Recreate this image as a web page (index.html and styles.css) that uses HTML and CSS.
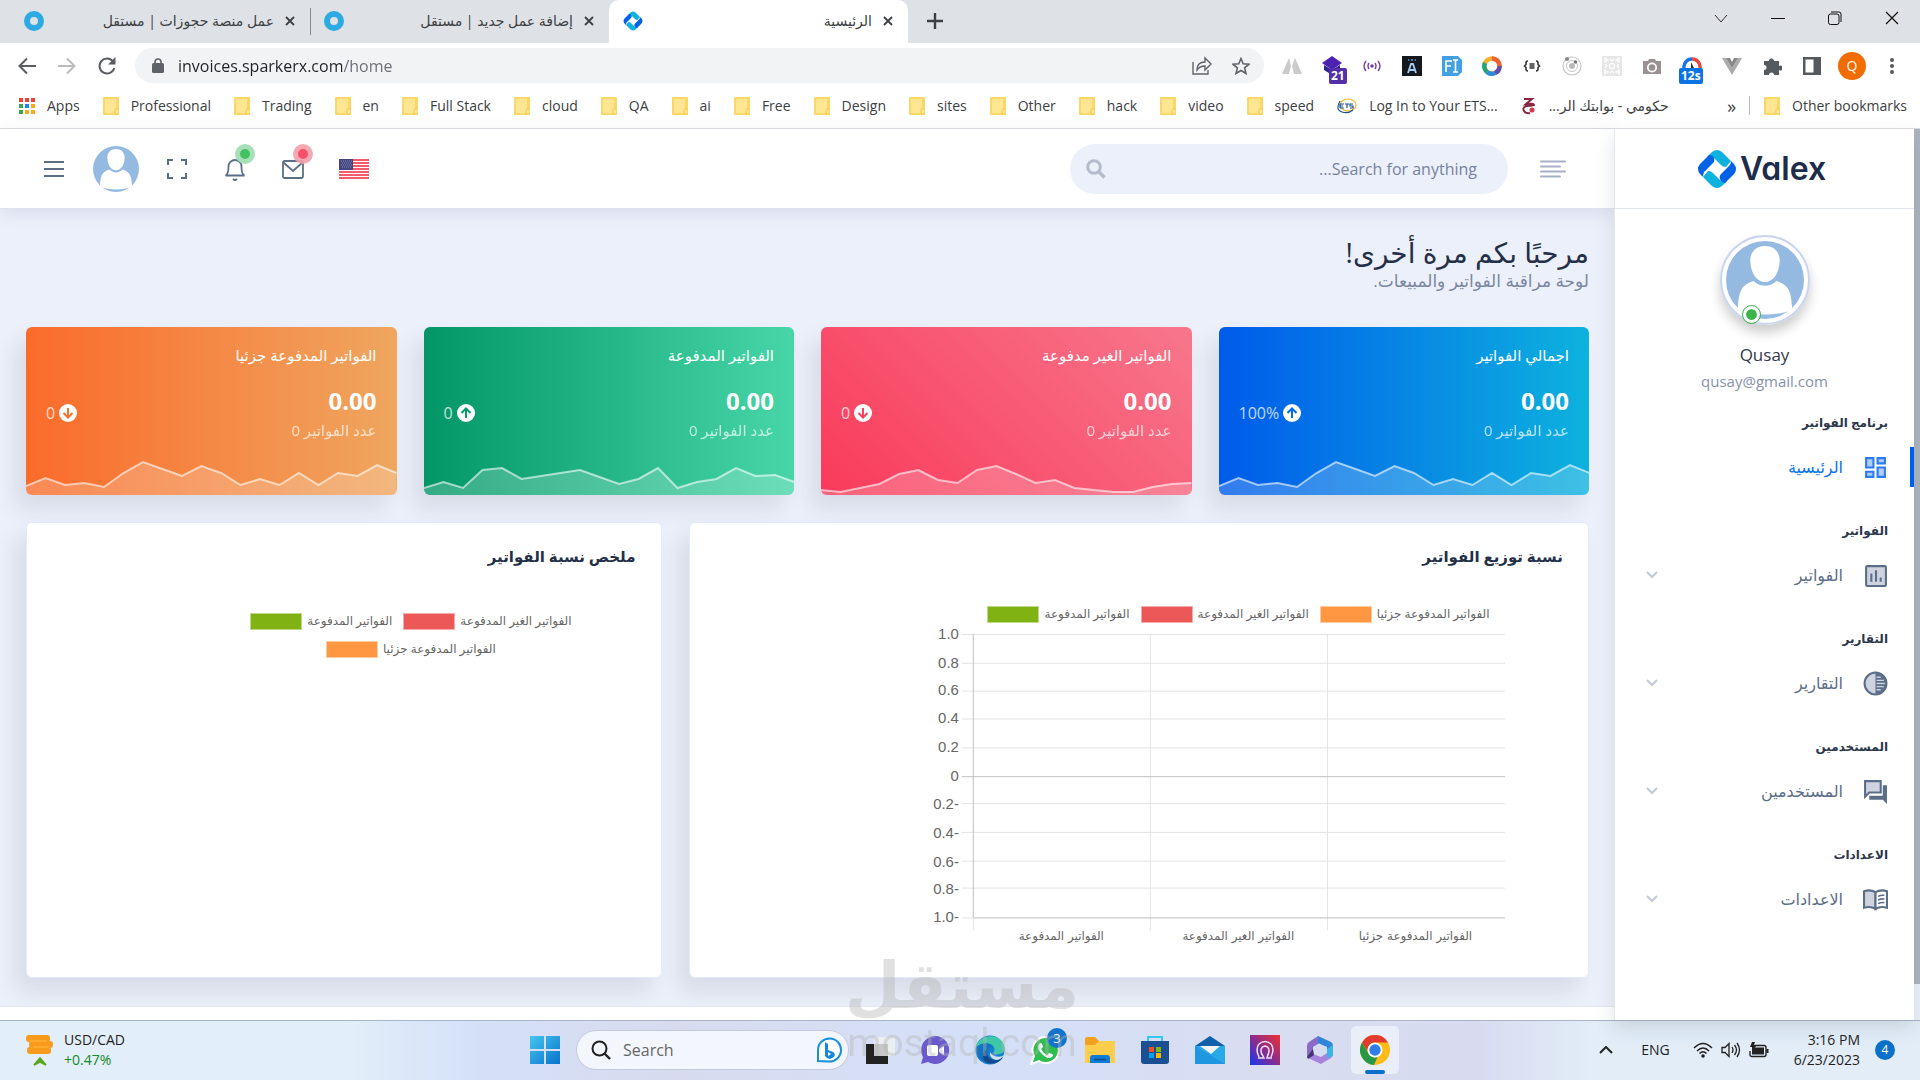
FILE: index.html
```html
<!DOCTYPE html>
<html lang="ar">
<head>
    <meta charset="utf-8">
    <meta name="viewport" content="width=device-width, initial-scale=1">
    <title>الرئيسية</title>
    <link rel="stylesheet" href="styles.css">
</head>
<body>
    <!-- shared icons -->
    <svg class="sprite" aria-hidden="true">
        <symbol id="folder" viewBox="0 0 16 18">
            <rect width="16" height="18" rx="1" fill="#fbd768"/>
            <path d="M2 2h11v10l-1 4H2z" fill="#ffe693"/>
            <rect x="12" y="12" width="4" height="5" rx="1" fill="#ffe693" stroke="#f7c948"/>
        </symbol>
        <symbol id="close" viewBox="0 0 10 10">
            <path d="M1 1l8 8M9 1L1 9" stroke="#3c4043" stroke-width="1.8"/>
        </symbol>
        <symbol id="mostaql" viewBox="0 0 20 20">
            <circle cx="10" cy="10" r="7" fill="none" stroke="#2caae1" stroke-width="6"/>
        </symbol>
        <symbol id="valex" viewBox="0 0 40 40">
            <path d="M15 3q5-4 10 0l9 9-5 6q-3 0-5-2l-7-7q-2-1-6 0l-1-1z" fill="#0db2de"/>
            <path d="M25 37q-5 4-10 0l-9-9 5-6q3 0 5 2l7 7q2 1 6 0l1 1z" fill="#0db2de"/>
            <path d="M3 25q-4-5 0-10l9-9q3-1 5 3 1 3-1 5l-9 9q-1 3-1 5z" fill="#0162e8"/>
            <path d="M37 15q4 5 0 10l-9 9q-4-1-5-4-1-3 1-5l8-8q2-2 2-5z" fill="#0162e8"/>
        </symbol>
        <symbol id="avatar" viewBox="0 0 80 80">
            <circle cx="40" cy="40" r="40" fill="#94bae1"/>
            <path d="M40 5c10 0 16 7 15 17-1 12-7 20-15 20s-14-8-15-20C24 12 30 5 40 5z" fill="#fff"/>
            <path d="M28 41q12 10 24 0c11 4 15 8 16 30-17 6-39 6-56 0 1-22 5-26 16-30z" fill="#fff"/>
        </symbol>
        <symbol id="chevron" viewBox="0 0 12 8">
            <path d="M1 1l5 5 5-5" fill="none" stroke="#c3c9d8" stroke-width="2"/>
        </symbol>
        <symbol id="arrow-up" viewBox="0 0 18 18">
            <circle cx="9" cy="9" r="9" fill="#fff"/>
            <path d="M9 14V4.500M4.500 9L9 4.500 13.500 9" fill="none" stroke="currentColor" stroke-width="2"/>
        </symbol>
        <symbol id="arrow-down" viewBox="0 0 18 18">
            <circle cx="9" cy="9" r="9" fill="#fff"/>
            <path d="M9 4v9.500M4.500 9L9 13.500 13.500 9" fill="none" stroke="currentColor" stroke-width="2"/>
        </symbol>
    </svg>

    <!-- tabs -->
    <div class="tab-strip">
        <div class="tab">
            <svg class="favicon"><use href="#mostaql"/></svg>
            <a href="#" dir="rtl">عمل منصة حجوزات | مستقل</a>
            <button type="button" aria-label="Close"><svg width="10" height="10"><use href="#close"/></svg></button>
        </div>
        <div class="tab tab-divided">
            <svg class="favicon"><use href="#mostaql"/></svg>
            <a href="#" dir="rtl">إضافة عمل جديد | مستقل</a>
            <button type="button" aria-label="Close"><svg width="10" height="10"><use href="#close"/></svg></button>
        </div>
        <div class="tab active">
            <svg class="favicon"><use href="#valex"/></svg>
            <a href="#" dir="rtl">الرئيسية</a>
            <button type="button" aria-label="Close"><svg width="10" height="10"><use href="#close"/></svg></button>
        </div>
        <button class="new-tab" type="button" aria-label="New tab"><svg width="16" height="16" viewBox="0 0 16 16"><path d="M8 0v16M0 8h16" stroke="#3c4043" stroke-width="2.400"/></svg></button>
        <div class="window-buttons">
            <button type="button" aria-label="Search tabs"><svg width="14" height="14" viewBox="0 0 14 14"><path d="M1 4l6 7 6-7" fill="none" stroke="#333"/></svg></button>
            <button type="button" aria-label="Minimize"><svg width="14" height="14" viewBox="0 0 14 14"><path d="M0 7.500h14" stroke="#111"/></svg></button>
            <button type="button" aria-label="Restore"><svg width="14" height="14" viewBox="0 0 14 14"><rect x=".5" y="3" width="10.500" height="10.500" rx="2" fill="none" stroke="#111"/><path d="M3 1h8q2 0 2 2v8" fill="none" stroke="#111"/></svg></button>
            <button type="button" aria-label="Close window"><svg width="14" height="14" viewBox="0 0 14 14"><path d="M1 1l12 12M13 1L1 13" stroke="#111" stroke-width="1.200"/></svg></button>
        </div>
    </div>

    <!-- address bar -->
    <div class="toolbar">
        <div class="nav-buttons">
            <button type="button" aria-label="Back"><svg width="18" height="18" viewBox="0 0 18 18"><path d="M18 9H2M9 1.500L1.500 9 9 16.500" fill="none" stroke="#5a5d61" stroke-width="2"/></svg></button>
            <button type="button" aria-label="Forward"><svg width="18" height="18" viewBox="0 0 18 18"><path d="M0 9h16M9 1.500L16.500 9 9 16.500" fill="none" stroke="#babcbe" stroke-width="2"/></svg></button>
            <button type="button" aria-label="Reload"><svg width="18" height="18" viewBox="0 0 18 18"><path d="M15 4.500A7.500 7.500 0 1 0 16.300 11" fill="none" stroke="#5a5d61" stroke-width="2"/><path d="M17.500 0v7.500H10z" fill="#5a5d61"/></svg></button>
        </div>
        <div class="address">
            <svg width="12" height="15" viewBox="0 0 12 15"><path d="M3 6V4a3 3 0 0 1 6 0v2" fill="none" stroke="#5f6368" stroke-width="1.600"/><rect y="5" width="12" height="10" rx="1.500" fill="#5f6368"/></svg>
            <input type="text" aria-label="Address" value="invoices.sparkerx.com/home">
            <svg width="20" height="20" viewBox="0 0 20 20"><path d="M1 6v12h15v-4M5 14c0-6 4-8 8-8V2l6 6-6 6v-4c-4 0-6 1-8 4z" fill="none" stroke="#5f6368" stroke-width="1.400"/></svg>
            <svg width="18" height="18" viewBox="0 0 18 18"><path d="M9 1.500l2.200 5.200 5.800.5-4.400 3.700 1.400 5.600-5-3-5 3 1.400-5.600L1 7.200l5.800-.5z" fill="none" stroke="#5f6368" stroke-width="1.600"/></svg>
        </div>
        <div class="extensions">
            <svg viewBox="0 0 20 20"><path d="M7 2l2 8-2 8H0zM13 2l-3 8 2 8h8z" fill="#cbcbcb"/></svg>
            <span class="ext-badge purple"><svg viewBox="0 0 20 20"><path d="M10 0l10 7-10 7L0 7z" fill="#4d22b3"/><path d="M2 9l8 5 8-5v5l-8 5-8-5z" fill="#31238c"/></svg><b>21</b></span>
            <svg viewBox="0 0 20 20"><circle cx="10" cy="10" r="1.800" fill="#7b3ea8"/><path d="M7 7q-2 3 0 6M13 7q2 3 0 6M4 5q-4 5 0 10M16 5q4 5 0 10" fill="none" stroke="#7b3ea8" stroke-width="1.400"/></svg>
            <svg viewBox="0 0 20 20"><rect width="20" height="20" fill="#15181e"/><path d="M6 17l3-9h2l3 9M7 14h6" fill="none" stroke="#a5cdf0" stroke-width="1.800"/><path d="M7 3q-1 1 0 2M13 3q1 1 0 2" stroke="#57a3dc" fill="none"/><circle cx="10" cy="4" r="1" fill="#57a3dc"/></svg>
            <svg viewBox="0 0 20 20"><path d="M0 0h16l4 4v12l-4 4H0z" fill="#44a1e1"/><path d="M4 16V5h6M4 10h5M11 4h5M11 16h5M13.500 4v12" stroke="#fff" stroke-width="1.600" fill="none"/></svg>
            <svg viewBox="0 0 20 20"><g fill="none" stroke-width="4.500"><circle cx="10" cy="10" r="7.600" stroke="#f5b32b" /><path d="M10 2.400A7.600 7.600 0 0 1 17.600 10" stroke="#ee6139"/><path d="M17.600 10A7.600 7.600 0 0 1 13 17" stroke="#5c4eb2"/><path d="M13 17a7.600 7.600 0 0 1-8-1" stroke="#2b8bdd"/><path d="M5 16a7.600 7.600 0 0 1-2-9" stroke="#1ea57b"/></g></svg>
            <svg viewBox="0 0 20 20"><path d="M6 5q-2 0-2 2v1.500L2.500 10 4 11.500V13q0 2 2 2M14 5q2 0 2 2v1.500l1.500 1.500-1.500 1.500V13q0 2-2 2M7.500 8h5M7.500 10h5M7.500 12h5" fill="none" stroke="#333" stroke-width="1.600"/></svg>
            <svg viewBox="0 0 20 20"><circle cx="10" cy="10" r="9" fill="none" stroke="#c4c4c4" stroke-width="1.200"/><circle cx="10" cy="10" r="5.500" fill="none" stroke="#c4c4c4"/><circle cx="10" cy="10" r="3" fill="#b9b9b9"/><circle cx="5" cy="3" r="2" fill="#888"/><circle cx="13.500" cy="6" r="1.800" fill="#777"/></svg>
            <svg viewBox="0 0 20 20"><rect width="20" height="20" fill="#e6e6e6"/><g fill="none" stroke="#fff" stroke-width="1.200"><circle cx="10" cy="10" r="2.500"/><path d="M3 2v4l3-2zM17 2v4l-3-2zM3 14v4l3-2zM17 14v4l-3-2zM8 3l2 2 2-2M8 17l2-2 2 2M3 8l2 2-2 2M17 8l-2 2 2 2"/></g></svg>
            <svg viewBox="0 0 20 20"><path d="M1 5h5l1-2h6l1 2h5v13H1z" fill="#9a9292"/><circle cx="10" cy="11.500" r="4.200" fill="none" stroke="#fff" stroke-width="1.800"/></svg>
            <span class="ext-badge blue"><svg viewBox="0 0 20 20"><path d="M2 12a8 8 0 0 1 8-9" fill="none" stroke="#1a73e8" stroke-width="3.500"/><path d="M10 3a8 8 0 0 1 8 9" fill="none" stroke="#e8453c" stroke-width="3.500"/><path d="M9 6l3 6H9z" fill="#333"/></svg><b>12s</b></span>
            <svg viewBox="0 0 20 20"><path d="M0 2h4l6 10 6-10h4L10 19z" fill="#ababab"/><path d="M4 2h4l2 4 2-4h4l-6 10z" fill="#868686"/></svg>
            <svg viewBox="0 0 20 20"><path d="M2 5h5a2.500 2.500 0 1 1 5 0h5v5a2.500 2.500 0 1 1 0 4v5h-5a2.500 2.500 0 1 0-5 0H2v-5a2.500 2.500 0 1 0 0-5z" fill="#56595d"/></svg>
            <svg viewBox="0 0 20 20"><path d="M1 1h18v18H1zM3.500 3.500v13h8v-13z" fill="#56595d" fill-rule="evenodd"/></svg>
            <button class="profile" type="button">Q</button>
            <svg viewBox="0 0 20 20"><g fill="#56595d"><circle cx="10" cy="4" r="2"/><circle cx="10" cy="10" r="2"/><circle cx="10" cy="16" r="2"/></g></svg>
        </div>
    </div>

    <!-- bookmarks -->
    <nav class="bookmarks">
        <a href="#"><svg width="16" height="16" viewBox="0 0 16 16"><path d="M0 0h4v4H0zM6 0h4v4H6zM12 0h4v4h-4z" fill="#ea4335"/><path d="M0 6h4v4H0zM0 12h4v4H0z" fill="#34a853"/><path d="M6 6h4v4H6z" fill="#1a83ee"/><path d="M12 6h4v4h-4zM6 12h4v4H6zM12 12h4v4h-4z" fill="#f9ab15"/></svg>Apps</a>
        <a href="#"><svg class="folder"><use href="#folder"/></svg>Professional</a>
        <a href="#"><svg class="folder"><use href="#folder"/></svg>Trading</a>
        <a href="#"><svg class="folder"><use href="#folder"/></svg>en</a>
        <a href="#"><svg class="folder"><use href="#folder"/></svg>Full Stack</a>
        <a href="#"><svg class="folder"><use href="#folder"/></svg>cloud</a>
        <a href="#"><svg class="folder"><use href="#folder"/></svg>QA</a>
        <a href="#"><svg class="folder"><use href="#folder"/></svg>ai</a>
        <a href="#"><svg class="folder"><use href="#folder"/></svg>Free</a>
        <a href="#"><svg class="folder"><use href="#folder"/></svg>Design</a>
        <a href="#"><svg class="folder"><use href="#folder"/></svg>sites</a>
        <a href="#"><svg class="folder"><use href="#folder"/></svg>Other</a>
        <a href="#"><svg class="folder"><use href="#folder"/></svg>hack</a>
        <a href="#"><svg class="folder"><use href="#folder"/></svg>video</a>
        <a href="#"><svg class="folder"><use href="#folder"/></svg>speed</a>
        <a href="#"><svg width="20" height="16" viewBox="0 0 20 16"><ellipse cx="11" cy="7" rx="8" ry="6" fill="none" stroke="#f2b632" stroke-width="1.200"/><path d="M3 3Q-2 12 5 14q6 2 11-2" fill="none" stroke="#1d4f91" stroke-width="1.200"/><path d="M3 6h4M3 8h3M3 10h4M3 6v4M8 6h4M10 6v4M16 6h-3v2h3v2h-3" fill="none" stroke="#1d4f91" stroke-width="1.200"/></svg>Log In to Your ETS...</a>
        <a href="#"><svg width="16" height="18" viewBox="0 0 16 18"><path d="M3 2h8L5 7q8-1 8 1-3 1-8 1-4 2-2 5t6 2" fill="none" stroke="#8a2740" stroke-width="2"/><circle cx="11" cy="13" r="2.500" fill="#e0344a"/></svg><span dir="rtl">حكومي - بوابتك الر...</span></a>
        <span class="more">»</span>
        <a class="other" href="#"><svg class="folder"><use href="#folder"/></svg>Other bookmarks</a>
    </nav>

    <!-- page -->
    <div class="page" dir="rtl">
        <div class="scrollbar"><div class="thumb"></div></div>

        <aside class="sidebar">
            <a class="logo" href="#" dir="ltr"><svg width="40" height="40"><use href="#valex"/></svg>Valex</a>
            <div class="user">
                <div class="user-photo">
                    <svg width="78" height="78"><use href="#avatar"/></svg>
                    <span class="status"></span>
                </div>
                <h4>Qusay</h4>
                <p>qusay@gmail.com</p>
            </div>
            <nav class="menu">
                <section class="current">
                    <h3>برنامج الفواتير</h3>
                    <a href="#">
                        <svg viewBox="0 0 24 24"><path d="M3 3h7v9H3zM14 3h7v5h-7zM14 12h7v9h-7zM3 16h7v5H3z" fill="#aecdf7" stroke="#2b7cee" stroke-width="2"/></svg>
                        <span>الرئيسية</span>
                    </a>
                </section>
                <section>
                    <h3>الفواتير</h3>
                    <a href="#">
                        <svg viewBox="0 0 24 24"><rect x="3" y="3" width="19" height="19" rx="1" fill="#ced3df" stroke="#5b6e88" stroke-width="2"/><path d="M8 10v8M12.500 7v11M17 14v4" stroke="#5b6e88" stroke-width="2"/></svg>
                        <span>الفواتير</span>
                        <svg class="arrow"><use href="#chevron"/></svg>
                    </a>
                </section>
                <section>
                    <h3>التقارير</h3>
                    <a href="#">
                        <svg viewBox="0 0 24 24"><circle cx="12" cy="12" r="10.500" fill="#ced3df" stroke="#5b6e88" stroke-width="2"/><path d="M12 2a10 10 0 0 1 0 20z" fill="#5b6e88"/><path d="M13 6h4M13 9h7M13 12h8M13 15h7M13 18h4" stroke="#ced3df" stroke-width="1.300"/></svg>
                        <span>التقارير</span>
                        <svg class="arrow"><use href="#chevron"/></svg>
                    </a>
                </section>
                <section>
                    <h3>المستخدمين</h3>
                    <a href="#">
                        <svg viewBox="0 0 24 24"><path d="M2 2h15v11H6l-4 4z" fill="#ced3df" stroke="#5b6e88" stroke-width="2"/><path d="M19 6h4v18l-4-4H6v-4h13z" fill="#5b6e88"/></svg>
                        <span>المستخدمين</span>
                        <svg class="arrow"><use href="#chevron"/></svg>
                    </a>
                </section>
                <section>
                    <h3>الاعدادات</h3>
                    <a href="#">
                        <svg viewBox="0 0 24 24"><path d="M1 4q6-2 11 1v16q-5-3-11-1z" fill="#ced3df" stroke="#5b6e88" stroke-width="2"/><path d="M12 5q5-3 11-1v16q-6-2-11 1z" fill="#fff" stroke="#5b6e88" stroke-width="2"/><path d="M14.500 9q3-1.500 6-1M14.500 12.500q3-1.500 6-1M14.500 16q3-1.500 6-1" fill="none" stroke="#5b6e88" stroke-width="1.500"/></svg>
                        <span>الاعدادات</span>
                        <svg class="arrow"><use href="#chevron"/></svg>
                    </a>
                </section>
            </nav>
        </aside>

        <main>
            <header class="page-header">
                <button type="button" aria-label="Toggle sidebar"><svg width="26" height="18" viewBox="0 0 26 18"><path d="M1 1.500h24M1 6.500h19M1 11.500h24M1 16.500h19" stroke="#a5b0c6" stroke-width="2" stroke-linecap="round"/></svg></button>
                <form class="search">
                    <input type="search" aria-label="Search" placeholder="Search for anything...">
                    <button type="button" aria-label="Go"><svg width="20" height="20" viewBox="0 0 20 20"><circle cx="8" cy="8" r="6.300" fill="none" stroke="#b4bccd" stroke-width="3"/><path d="M12.500 12.500l6 6" stroke="#b4bccd" stroke-width="3.500"/></svg></button>
                </form>
                <div class="header-icons">
                    <button class="flag" type="button" aria-label="Language"><svg width="30" height="20" viewBox="0 0 30 20"><path fill="#fff" d="M0 0h30v20H0z"/><path d="M0 1h30M0 4h30M0 7h30M0 10h30M0 13h30M0 16h30M0 19h30" stroke="#f5596c" stroke-width="1.800"/><path fill="#46467f" d="M0 0h14v11H0z"/><path d="M2 2h11M3 4h10M2 6h11M3 8h10" stroke="#8087b8" stroke-dasharray="1 1"/></svg></button>
                    <button class="mail" type="button" aria-label="Messages"><svg width="24" height="24" viewBox="0 0 24 24" fill="none" stroke="#5b6e88" stroke-width="1.800"><rect x="2" y="4" width="20" height="17" rx="1.500"/><path d="M2 5l10 9 10-9"/></svg><i></i></button>
                    <button class="bell" type="button" aria-label="Notifications"><svg width="24" height="24" viewBox="0 0 24 24" fill="none" stroke="#5b6e88" stroke-width="1.800"><path d="M2.500 18.500q3-1 3-9a6.500 6.500 0 0 1 13 0q0 8 3 9zM10 22q2 2 4 0"/></svg><i></i></button>
                    <button type="button" aria-label="Fullscreen"><svg width="24" height="24" viewBox="0 0 24 24" fill="none" stroke="#5b6e88" stroke-width="2"><path d="M8 3H3v5M16 3h5v5M8 21H3v-5M16 21h5v-5"/></svg></button>
                    <button class="account" type="button" aria-label="Account"><svg width="46" height="46"><use href="#avatar"/></svg></button>
                    <button type="button" aria-label="Menu"><svg width="24" height="24" viewBox="0 0 24 24"><path d="M2 5h20M2 12h20M2 19h20" stroke="#5b6e88" stroke-width="2"/></svg></button>
                </div>
            </header>

            <div class="content">
                <div class="welcome">
                    <h2>مرحبًا بكم مرة أخرى!</h2>
                    <p>لوحة مراقبة الفواتير والمبيعات.</p>
                </div>

                <div class="stats">
                    <div class="stat blue">
                        <h6>اجمالي الفواتير</h6>
                        <div class="stat-row">
                            <div><h4>0.00</h4><p>عدد الفواتير 0</p></div>
                            <span class="change"><svg width="18" height="18"><use href="#arrow-up"/></svg>100%</span>
                        </div>
                        <svg class="spark" viewBox="0 0 380 40" preserveAspectRatio="none">
                            <path d="M0 31L20 23 40 30 60 28 80 32 100 18 120 7 140 14 160 21 180 11 200 18 220 30 240 24 260 30 280 18 300 30 320 18 340 21 360 10 380 18V40H0z"/>
                            <polyline points="0,31 20,23 40,30 60,28 80,32 100,18 120,7 140,14 160,21 180,11 200,18 220,30 240,24 260,30 280,18 300,30 320,18 340,21 360,10 380,18"/>
                        </svg>
                    </div>
                    <div class="stat red">
                        <h6>الفواتير الغير مدفوعة</h6>
                        <div class="stat-row">
                            <div><h4>0.00</h4><p>عدد الفواتير 0</p></div>
                            <span class="change"><svg width="18" height="18"><use href="#arrow-down"/></svg>0</span>
                        </div>
                        <svg class="spark" viewBox="0 0 380 40" preserveAspectRatio="none">
                            <path d="M0 35L20 37 40 33 60 29 80 19 100 15 120 25 140 28 160 15 180 11 200 19 220 28 240 25 260 33 280 35 300 37 320 37 340 32 360 29 380 28V40H0z"/>
                            <polyline points="0,35 20,37 40,33 60,29 80,19 100,15 120,25 140,28 160,15 180,11 200,19 220,28 240,25 260,33 280,35 300,37 320,37 340,32 360,29 380,28"/>
                        </svg>
                    </div>
                    <div class="stat green">
                        <h6>الفواتير المدفوعة</h6>
                        <div class="stat-row">
                            <div><h4>0.00</h4><p>عدد الفواتير 0</p></div>
                            <span class="change"><svg width="18" height="18"><use href="#arrow-up"/></svg>0</span>
                        </div>
                        <svg class="spark" viewBox="0 0 380 40" preserveAspectRatio="none">
                            <path d="M0 33L20 27 40 33 60 15 80 13 100 24 120 21 140 18 160 15 180 22 200 29 220 24 240 13 260 33 280 27 300 24 320 13 340 21 360 20 380 27V40H0z"/>
                            <polyline points="0,33 20,27 40,33 60,15 80,13 100,24 120,21 140,18 160,15 180,22 200,29 220,24 240,13 260,33 280,27 300,24 320,13 340,21 360,20 380,27"/>
                        </svg>
                    </div>
                    <div class="stat orange">
                        <h6>الفواتير المدفوعة جزئيا</h6>
                        <div class="stat-row">
                            <div><h4>0.00</h4><p>عدد الفواتير 0</p></div>
                            <span class="change"><svg width="18" height="18"><use href="#arrow-down"/></svg>0</span>
                        </div>
                        <svg class="spark" viewBox="0 0 380 40" preserveAspectRatio="none">
                            <path d="M0 31L20 23 40 30 60 28 80 32 100 18 120 7 140 14 160 21 180 11 200 18 220 30 240 24 260 30 280 18 300 30 320 18 340 21 360 10 380 18V40H0z"/>
                            <polyline points="0,31 20,23 40,30 60,28 80,32 100,18 120,7 140,14 160,21 180,11 200,18 220,30 240,24 260,30 280,18 300,30 320,18 340,21 360,10 380,18"/>
                        </svg>
                    </div>
                </div>

                <div class="charts">
                    <div class="card wide">
                        <h5>نسبة توزيع الفواتير</h5>
                        <div class="bar-chart" dir="ltr">
                            <ul class="legend">
                                <li><span class="swatch paid"></span>الفواتير المدفوعة</li>
                                <li><span class="swatch unpaid"></span>الفواتير الغير المدفوعة</li>
                                <li><span class="swatch partial"></span>الفواتير المدفوعة جزئيا</li>
                            </ul>
                            <svg viewBox="0 0 580 326">
                                <path class="grid" d="M30 39.500h546M30 67.500h546M30 95.500h546M30 124.500h546M30 180.500h546M30 209.500h546M30 238.500h546M30 265.500h546M30 10.500h546M219.500 10v298M397.500 10v298"/>
                                <path class="axis" d="M41.500 10v285M30 153.500h546M41 295.500h535"/>
                                <path class="grid" d="M30 295.500h11M41.500 296v12"/>
                                <g class="ticks">
                                    <text x="27" y="15">1.0</text>
                                    <text x="27" y="44">0.8</text>
                                    <text x="27" y="71">0.6</text>
                                    <text x="27" y="100">0.4</text>
                                    <text x="27" y="129">0.2</text>
                                    <text x="27" y="158">0</text>
                                    <text x="27" y="186">-0.2</text>
                                    <text x="27" y="215">-0.4</text>
                                    <text x="27" y="244">-0.6</text>
                                    <text x="27" y="271">-0.8</text>
                                    <text x="27" y="300">-1.0</text>
                                </g>
                                <g class="labels">
                                    <text x="130" y="318">الفواتير المدفوعة</text>
                                    <text x="308" y="318">الفواتير الغير المدفوعة</text>
                                    <text x="486" y="318">الفواتير المدفوعة جزئيا</text>
                                </g>
                            </svg>
                        </div>
                    </div>
                    <div class="card narrow">
                        <h5>ملخص نسبة الفواتير</h5>
                        <ul class="legend" dir="ltr">
                            <li><span class="swatch paid"></span>الفواتير المدفوعة</li>
                            <li><span class="swatch unpaid"></span>الفواتير الغير المدفوعة</li>
                            <li><span class="swatch partial"></span>الفواتير المدفوعة جزئيا</li>
                        </ul>
                    </div>
                </div>
            </div>
            <footer></footer>
        </main>
    </div>

    <!-- taskbar -->
    <div class="taskbar">
        <a class="widget" href="#">
            <svg width="30" height="34" viewBox="0 0 30 34"><g fill="#f89b1c"><rect x="1" y="2" width="24" height="7" rx="3"/><rect x="4" y="8" width="24" height="7" rx="3"/><rect x="2" y="14" width="24" height="7" rx="3"/></g><path d="M5 8h17M8 14h16" stroke="#ffb83c" stroke-width="1.200"/><path d="M9 32l6-7 6 7-6-3z" fill="#58a618" stroke="#58a618" stroke-width="1.500"/></svg>
            <span>USD/CAD<b>+0.47%</b></span>
        </a>
        <div class="apps">
            <button class="start" type="button" aria-label="Start"><svg width="30" height="30" viewBox="0 0 30 30"><defs><linearGradient id="win" x2="1" y2="1"><stop stop-color="#45c6f0"/><stop offset="1" stop-color="#0872cc"/></linearGradient></defs><path d="M0 1h14v13H0zM16 1h14v13H16zM0 16h14v13H0zM16 16h14v13H16z" fill="url(#win)"/></svg></button>
            <label class="task-search">
                <svg width="20" height="20" viewBox="0 0 20 20"><circle cx="8.500" cy="8.500" r="7" fill="none" stroke="#222" stroke-width="2"/><path d="M13.500 13.500l5.500 5.500" stroke="#222" stroke-width="2.400"/></svg>
                <input type="text" placeholder="Search">
                <svg width="26" height="26" viewBox="0 0 26 26"><path d="M2 24V13A11.500 11.500 0 1 1 13 24.500z" fill="#fff" stroke="#178fdd" stroke-width="2"/><path d="M9 5l3 2v6l5 2q3 2 1 5l-4 2q-3 0-5-3z" fill="#1687e0"/><path d="M12 15l3 2-3 2z" fill="#fff"/></svg>
            </label>
            <button type="button" aria-label="Task view"><svg viewBox="0 0 30 30"><path d="M1 9h22v20H1z" fill="#222"/><path d="M9 2h21v19H9z" fill="#f1f1f1" opacity=".8"/></svg></button>
            <button type="button" aria-label="Chat"><svg viewBox="0 0 30 30"><path d="M15 1a14 14 0 1 1-7 26l-7 2 2-7A14 14 0 0 1 15 1z" fill="#6a5acb"/><rect x="7" y="10" width="11" height="11" rx="2" fill="#fff"/><path d="M19 14l5-3v9l-5-3z" fill="#fff"/></svg></button>
            <button type="button" aria-label="Edge"><svg viewBox="0 0 30 30"><circle cx="15" cy="15" r="14.500" fill="#1181cf"/><path d="M1 12C4-2 28-3 29.500 13c0 5-4 7-9 6-3-1-1-2-1-5 0-6-12-8-18.500-2z" fill="#3fc7a8"/><path d="M1 13c8-7 15-5 17-1-6-1-8 9-1 12 5 2 9 0 11-2-5 10-27 10-27-9z" fill="#1273c2"/><path d="M12 15c-2 7 6 14 16 7-5 9-22 9-20-3q1-4 4-4z" fill="#144a8c"/><path d="M29 20c-3 3-12 2-14-3q-1 6 6 8 5 0 8-5z" fill="#d6def5"/></svg></button>
            <button class="whatsapp" type="button" aria-label="WhatsApp"><svg viewBox="0 0 30 30"><path d="M15 2a13 13 0 1 1-6 24l-8 3 3-8A13 13 0 0 1 15 2z" fill="#2ebd4f" stroke="#fff" stroke-width="2"/><path d="M9 9q2-2 3 0l1 3-2 2q2 4 6 6l2-2 3 1q2 1 0 3-4 3-10-3T9 9z" fill="#fff"/></svg><i>3</i></button>
            <button type="button" aria-label="Explorer"><svg viewBox="0 0 30 30"><path d="M0 4q0-2 2-2h8l4 4h14q2 0 2 2v20H0z" fill="#f2a11f"/><path d="M0 10h10l4-4h16v22H0z" fill="#fecd4b"/><path d="M5 28v-5q0-3 3-3h14q3 0 3 3v5z" fill="#0f7bd2"/><path d="M9 24.500h12" stroke="#0a4f94" stroke-width="1.500"/></svg></button>
            <button type="button" aria-label="Store"><svg viewBox="0 0 30 30"><path d="M8 7V2h14v5" fill="none" stroke="#36c5f0" stroke-width="2"/><path d="M1 6h28v20q0 3-3 3H4q-3 0-3-3z" fill="#1b4f93"/><path d="M9 12h5v5H9z" fill="#f25022"/><path d="M16 12h5v5h-5z" fill="#7fba00"/><path d="M9 18h5v5H9z" fill="#00a4ef"/><path d="M16 18h5v5h-5z" fill="#ffb900"/></svg></button>
            <button type="button" aria-label="Mail"><svg viewBox="0 0 30 30"><path d="M0 11L15 1l15 10z" fill="#1160ac"/><path d="M0 11h30v18H0z" fill="#27a9ea"/><path d="M5 11h20l-9 8z" fill="#f4f4f4"/><path d="M0 11l30 18H0z" fill="#1d8fdc" opacity=".7"/></svg></button>
            <button type="button" aria-label="App"><svg viewBox="0 0 30 30"><defs><linearGradient id="app" x1="0" y1="1" x2="1" y2="0"><stop stop-color="#1238f0"/><stop offset=".5" stop-color="#8d2c8c"/><stop offset="1" stop-color="#f03030"/></linearGradient></defs><path d="M0 0h30v30H0z" fill="url(#app)"/><path d="M9 22q-4-8 0-13 6-5 12 0 4 5 0 13M12 20q-3-8 3-9 6 1 3 9M8 23h6l-2-4M22 23h-5l1-4" fill="none" stroke="#f3dff0" stroke-width="1.500"/></svg></button>
            <button type="button" aria-label="Microsoft 365"><svg viewBox="0 0 30 30"><path d="M13 1L4 7q-2 1-2 4v11l6-3v-7l8-5z" fill="#8a6bc8"/><path d="M13 1l13 6q2 1 2 4v9l-6-3v-5l-9-4z" fill="#2f86d8"/><path d="M28 19q0 2-2 4l-10 6-13-6 5-4 8 3 6-4z" fill="#a684dc"/><path d="M28 10v11l-6 2v-9z" fill="#3bb5e8"/><path d="M2 22l6-8 1 6-6 4z" fill="#44356f"/></svg></button>
            <button class="running" type="button" aria-label="Chrome"><svg viewBox="0 0 30 30"><circle cx="15" cy="15" r="15" fill="#fbbc16"/><path d="M2 7.500A15 15 0 0 1 28 7.500H15a7.500 7.500 0 0 0-7 10z" fill="#e33b2e"/><path d="M2 7.500l6.500 11a7.500 7.500 0 0 0 9 3.500L14 30A15 15 0 0 1 2 7.500z" fill="#279847"/><circle cx="15" cy="15" r="7.500" fill="#fff"/><circle cx="15" cy="15" r="5.700" fill="#2f7de9"/></svg></button>
        </div>
        <div class="tray">
            <svg width="14" height="8" viewBox="0 0 14 8"><path d="M1 7l6-6 6 6" fill="none" stroke="#222" stroke-width="2"/></svg>
            <span class="lang">ENG</span>
            <svg width="20" height="16" viewBox="0 0 20 16"><path d="M1 6q9-9 18 0M4 9q6-6 12 0M6.500 11.500q3.500-3.500 7 0" fill="none" stroke="#222" stroke-width="1.500"/><circle cx="10" cy="14" r="1.800" fill="#222"/></svg>
            <svg width="20" height="16" viewBox="0 0 20 16"><path d="M1 5.500h3l4-4v13l-4-4H1zM11 5q2 3 0 6M13.500 3q4 5 0 10M16 1q5 7 0 14" fill="none" stroke="#222" stroke-width="1.300"/></svg>
            <svg width="20" height="16" viewBox="0 0 20 16"><path d="M6 3.500h9q2 0 2 2v7q0 2-2 2H3q-2 0-2-2V9" fill="none" stroke="#222" stroke-width="1.400"/><path d="M6 5.500h9v7H3V9zM17.500 7h2v4h-2zM3 0h3L5 3h3L3 9V5H1z" fill="#222"/></svg>
            <span class="clock">3:16 PM<br>6/23/2023</span>
            <span class="count">4</span>
        </div>
    </div>

    <div class="watermark"><b>مستقل</b><span>mostaql.com</span></div>
</body>
</html>
```
FILE: styles.css
```css
* {
    box-sizing: border-box;
}

body {
    display: flex;
    flex-direction: column;
    position: relative;
    min-height: 100vh;
    margin: 0;
    background-color: #fff;
    color: #3c4043;
    font-family: "Open Sans", "DejaVu Sans", sans-serif;
    font-size: 14px;
}

h2, h3, h4, h5, h6, p, ul {
    margin: 0;
    padding: 0;
}

a {
    color: inherit;
    text-decoration: none;
}

button {
    display: flex;
    align-items: center;
    justify-content: center;
    padding: 0;
    border: none;
    background: none;
    font-family: inherit;
    cursor: pointer;
}

input {
    min-width: 0;
    border: none;
    outline: none;
    background: none;
    font-family: inherit;
}

svg {
    display: block;
    flex: none;
}

.sprite {
    position: absolute;
    width: 0;
    height: 0;
}

/* browser tabs */
.tab-strip {
    display: flex;
    align-items: stretch;
    height: 43px;
    background-color: #dee1e6;
}

.tab {
    display: flex;
    align-items: center;
    width: 299px;
    padding: 0 14px 2px 24px;
}

.tab:first-child {
    width: 310px;
}

.tab a {
    flex: 1;
    margin: 0 10px;
    font-size: 14px;
}

.tab button {
    width: 12px;
}

.tab-divided {
    border-left: 1px solid #85888c;
    border-image: linear-gradient(transparent 20%, #85888c 20%, #85888c 80%, transparent 80%) 1;
    padding-left: 13px;
}

.tab.active {
    background-color: #fff;
    border-radius: 10px 10px 0 0;
    padding-left: 14px;
}

.favicon {
    width: 20px;
    height: 20px;
}

.new-tab {
    width: 54px;
    padding-bottom: 2px;
}

.window-buttons {
    display: flex;
    margin-left: auto;
    height: 36px;
}

.window-buttons button {
    width: 57px;
}

/* browser toolbar */
.toolbar {
    display: flex;
    align-items: center;
    height: 45px;
    padding: 0 18px;
}

.nav-buttons {
    display: flex;
    gap: 22px;
    width: 117px;
}

.address {
    display: flex;
    flex: 1;
    align-items: center;
    gap: 20px;
    height: 35px;
    padding: 0 14px 0 17px;
    border-radius: 18px;
    background-color: #f1f3f4;
}

/* domain dark, path grey */
.address input {
    flex: 1;
    margin-left: -8px;
    background-image: linear-gradient(to right, #202124 166px, #6a6e73 166px);
    background-clip: text;
    -webkit-background-clip: text;
    color: transparent;
    font-size: 16px;
}

.extensions {
    display: flex;
    align-items: center;
    gap: 20px;
    padding-left: 18px;
}

.extensions svg {
    width: 20px;
    height: 20px;
}

.ext-badge {
    position: relative;
}

.ext-badge b {
    position: absolute;
    left: 7px;
    top: 12px;
    padding: 0 2px;
    border-radius: 2px;
    background-color: #0b74e4;
    color: #fff;
    font-size: 12px;
    line-height: 16px;
}

.ext-badge.blue b {
    left: -3px;
}

.ext-badge.purple b {
    background-color: #532fa9;
}

.profile {
    width: 28px;
    height: 28px;
    margin: 0 -4px;
    border-radius: 50%;
    background-color: #f26c00;
    color: #fff;
    font-size: 14px;
}

/* bookmarks */
.bookmarks {
    display: flex;
    align-items: center;
    gap: 23px;
    height: 41px;
    padding: 0 13px 5px 19px;
    border-bottom: 1px solid #dadce0;
    white-space: nowrap;
}

.bookmarks a {
    display: flex;
    align-items: center;
    gap: 12px;
}

.folder {
    width: 16px;
    height: 18px;
}

.bookmarks .more {
    margin-left: auto;
    font-size: 18px;
    line-height: 20px;
}

.bookmarks .other {
    margin-left: -10px;
    padding-left: 14px;
    border-left: 1px solid #babcbe;
}

/* page frame */
.page {
    display: flex;
    flex: 1;
    background-color: #fff;
}

.scrollbar {
    width: 6px;
    background-color: #ecf0fa;
}

.thumb {
    height: 96%;
    background-color: #abb4be;
}

main {
    display: flex;
    flex: 1;
    flex-direction: column;
    min-width: 0;
    background-color: #ecf0fa;
}

/* sidebar */
.sidebar {
    position: relative;
    width: 300px;
    border-left: 1px solid #e1e6f1;
    background-color: #fff;
    box-shadow: 0 8px 18px rgba(104, 113, 123, 0.2);
}

.logo {
    display: flex;
    align-items: center;
    justify-content: center;
    gap: 3px;
    height: 80px;
    padding-right: 6px;
    border-bottom: 1px solid #e1e6f1;
    color: #1d2c4b;
    font-family: Inter, sans-serif;
    font-feature-settings: "cv11";
    font-size: 32px;
    font-weight: 600;
}

.user {
    padding-top: 26px;
    text-align: center;
}

.user-photo {
    position: relative;
    display: inline-block;
    padding: 4px;
    border: 2px solid #c9d5ee;
    border-radius: 50%;
    box-shadow: 0 8px 12px rgba(0, 0, 0, 0.2);
}

.status {
    position: absolute;
    bottom: 0;
    left: 21px;
    width: 17px;
    height: 17px;
    border: 3px solid #fff;
    border-radius: 50%;
    outline: 1px solid #3bb54a;
    background-color: #3bb54a;
    background-clip: padding-box;
}

.user h4 {
    margin-top: 12px;
    color: #32394e;
    font-size: 17px;
    font-weight: 400;
    line-height: 28px;
}

.user p {
    color: #8691ab;
    font-size: 15px;
    line-height: 24px;
}

.menu {
    padding-top: 20px;
}

.menu section {
    height: 108px;
    padding: 0 26px 0 31px;
}

.menu h3 {
    color: #2c364c;
    font-size: 12px;
    line-height: 20px;
}

.menu a {
    display: flex;
    align-items: center;
    gap: 20px;
    height: 40px;
    margin-top: 14px;
    color: #5b6e88;
    font-size: 16px;
}

.menu a svg {
    width: 25px;
    height: 25px;
}

.menu a .arrow {
    width: 12px;
    height: 8px;
    margin-right: auto;
}

.menu .current a {
    margin-right: -26px;
    padding-right: 22px;
    border-right: 4px solid #005ee9;
    color: #0774f0;
}

/* page header */
.page-header {
    display: flex;
    align-items: center;
    gap: 32px;
    height: 80px;
    padding: 0 48px 0 42px;
    border-bottom: 1px solid #dfe3f0;
    background-color: #fff;
    box-shadow: 0 4px 16px rgba(70, 80, 140, 0.12);
}

.search {
    display: flex;
    align-items: center;
    width: 438px;
    height: 50px;
    padding: 0 31px 0 16px;
    border-radius: 25px;
    background-color: #ecf0fa;
}

.search input {
    flex: 1;
    padding: 0;
    font-size: 16px;
}

.search input::placeholder {
    color: #7582a0;
    opacity: 1;
}

.header-icons {
    display: flex;
    align-items: center;
    gap: 34px;
    margin-right: auto;
}

.header-icons .account {
    margin: 0 -8px 0 -7px;
}

.mail, .bell {
    position: relative;
}

.header-icons i {
    position: absolute;
    top: -13px;
    left: 12px;
    width: 20px;
    height: 20px;
    border: 5px solid #f7a0ab;
    border-radius: 50%;
    background-color: #f73d58;
    opacity: 0.9;
}

.header-icons .bell i {
    border-color: #9edcb0;
    background-color: #2fbc50;
}

/* content */
.content {
    flex: 1;
    padding: 25px 25px 26px 26px;
}

.welcome {
    height: 93px;
}

.welcome h2 {
    color: #242f48;
    font-size: 28px;
    font-weight: 400;
    line-height: 36px;
}

.welcome p {
    color: #7987a1;
    font-size: 17px;
    line-height: 22px;
}

.stats {
    display: grid;
    grid-template-columns: repeat(4, 1fr);
    gap: 27px;
}

.stat {
    display: flex;
    flex-direction: column;
    height: 168px;
    overflow: hidden;
    border-radius: 6px;
    color: #fff;
}

.stat, .card {
    box-shadow: -10px 14px 22px rgba(25, 42, 70, 0.1);
}

.stat h6 {
    padding: 17px 20px 0;
    font-size: 15px;
    font-weight: 400;
    line-height: 22px;
}

.stat-row {
    display: flex;
    align-items: center;
    justify-content: space-between;
    flex: 1;
    padding: 4px 20px 0;
}

.stat h4 {
    font-size: 24px;
    line-height: 34px;
}

.stat p {
    font-size: 15px;
    line-height: 24px;
    opacity: 0.7;
}

.change {
    display: flex;
    align-items: center;
    gap: 4px;
    color: rgba(255, 255, 255, 0.75);
    font-size: 16px;
}

.spark {
    width: 100%;
    height: 40px;
}

.spark path {
    fill: rgba(255, 255, 255, 0.2);
}

.spark polyline {
    fill: none;
    stroke: rgba(255, 255, 255, 0.6);
    stroke-width: 2;
}

.stat.blue {
    background-image: linear-gradient(to right, #005bea, #0db2de);
}

.stat.red {
    background-image: linear-gradient(45deg, #f93a5a, #f7778c);
}

.stat.green {
    background-image: linear-gradient(to right, #029666, #48d6a8);
}

.stat.orange {
    background-image: linear-gradient(to right, #fa6b2b, #efa65f);
}

.blue .change svg {
    color: #0567e9;
}

.red .change svg {
    color: #f9415f;
}

.green .change svg {
    color: #079a6b;
}

.orange .change svg {
    color: #f96f30;
}

.charts {
    display: grid;
    grid-template-columns: repeat(12, 1fr);
    gap: 27px;
    margin-top: 27px;
}

.card {
    min-height: 456px;
    padding: 22px 25px;
    border: 1px solid #e3ebfa;
    border-radius: 6px;
    background-color: #fff;
}

.card.wide {
    grid-column: span 7;
}

.card.narrow {
    grid-column: span 5;
}

.card h5 {
    color: #242f48;
    font-size: 15px;
    line-height: 22px;
}

.legend {
    display: flex;
    flex-wrap: wrap;
    justify-content: center;
    gap: 8px 11px;
    color: #666;
    font-size: 12px;
    line-height: 20px;
    list-style: none;
}

.legend li {
    display: flex;
    align-items: center;
    gap: 5px;
}

.swatch {
    width: 52px;
    height: 17px;
    border: 1px solid rgba(255, 255, 255, 0.5);
}

.paid {
    background-color: #81b214;
}

.unpaid {
    background-color: #ec5858;
}

.partial {
    background-color: #ff9642;
}

.narrow .legend {
    width: 77%;
    margin-top: 44px;
}

.bar-chart {
    width: 68%;
    margin: 37px 54px 0 0;
}

.bar-chart .legend {
    padding-left: 36px;
}

.bar-chart svg {
    width: 100%;
}

.grid {
    stroke: #e3e3e3;
}

.axis {
    stroke: #bfbfbf;
}

.ticks text {
    direction: rtl;
    fill: #666;
    font-family: "Liberation Sans", sans-serif;
    font-size: 15px;
}

.labels text {
    fill: #666;
    font-family: "DejaVu Sans", sans-serif;
    font-size: 12px;
    text-anchor: middle;
}

footer {
    height: 14px;
    border-top: 1px solid #e1e6f1;
    background-color: #fff;
}

/* taskbar */
.taskbar {
    display: flex;
    align-items: center;
    height: 60px;
    padding: 0 25px 2px;
    border-top: 1px solid #a9b4c6;
    background-image: linear-gradient(to right, #e2eef9 0%, #e2eef9 18%, #d4e0f8 25%, #d8dbee 35%, #d4e0f8 50%, #d8ddf1 65%, #d8dbf0 77%, #e2edf8 83%, #e2edf8 100%);
    color: #1f1f1f;
}

.widget, .tray {
    display: flex;
    flex: 1;
    align-items: center;
    gap: 9px;
    line-height: 20px;
}

.widget b {
    display: block;
    color: #148a28;
    font-weight: 400;
}

.apps {
    display: flex;
    align-items: center;
    gap: 7px;
}

.apps button {
    position: relative;
    width: 48px;
    height: 48px;
    border-radius: 5px;
}

.apps button svg {
    width: 30px;
    height: 30px;
}

.apps .running {
    background-color: #eaeef8;
}

.apps .running::after {
    content: "";
    position: absolute;
    bottom: 0;
    width: 20px;
    height: 4px;
    border-radius: 2px;
    background-color: #0b70c9;
}

.whatsapp i {
    position: absolute;
    top: 2px;
    right: 2px;
    width: 20px;
    border-radius: 50%;
    background-color: #1173cc;
    color: #fff;
    font-size: 13px;
    font-style: normal;
    line-height: 20px;
}

.task-search {
    display: flex;
    align-items: center;
    gap: 10px;
    width: 273px;
    height: 40px;
    padding: 0 6px 0 14px;
    border: 1px solid #c3cadb;
    border-radius: 20px;
    background-color: #f3f6fd;
}

.task-search input {
    flex: 1;
    font-size: 16px;
}

.task-search input::placeholder {
    color: #666;
    opacity: 1;
}

.tray {
    justify-content: flex-end;
    gap: 8px;
}

.tray .lang {
    padding: 0 15px 0 20px;
}

.tray .clock {
    padding-left: 17px;
    text-align: right;
}

.count {
    width: 20px;
    margin-left: 7px;
    border-radius: 50%;
    background-color: #0b70c9;
    color: #fff;
    font-size: 12px;
    text-align: center;
}

/* lies over the bottom of the window */
.watermark {
    display: flex;
    flex-direction: column;
    align-items: center;
    position: absolute;
    bottom: 16px;
    left: 845px;
    color: #b4b4b4;
    opacity: 0.4;
    pointer-events: none;
}

.watermark b {
    font-size: 64px;
    line-height: 76px;
}

.watermark span {
    font-family: Roboto, sans-serif;
    font-size: 39px;
    line-height: 42px;
}
```
